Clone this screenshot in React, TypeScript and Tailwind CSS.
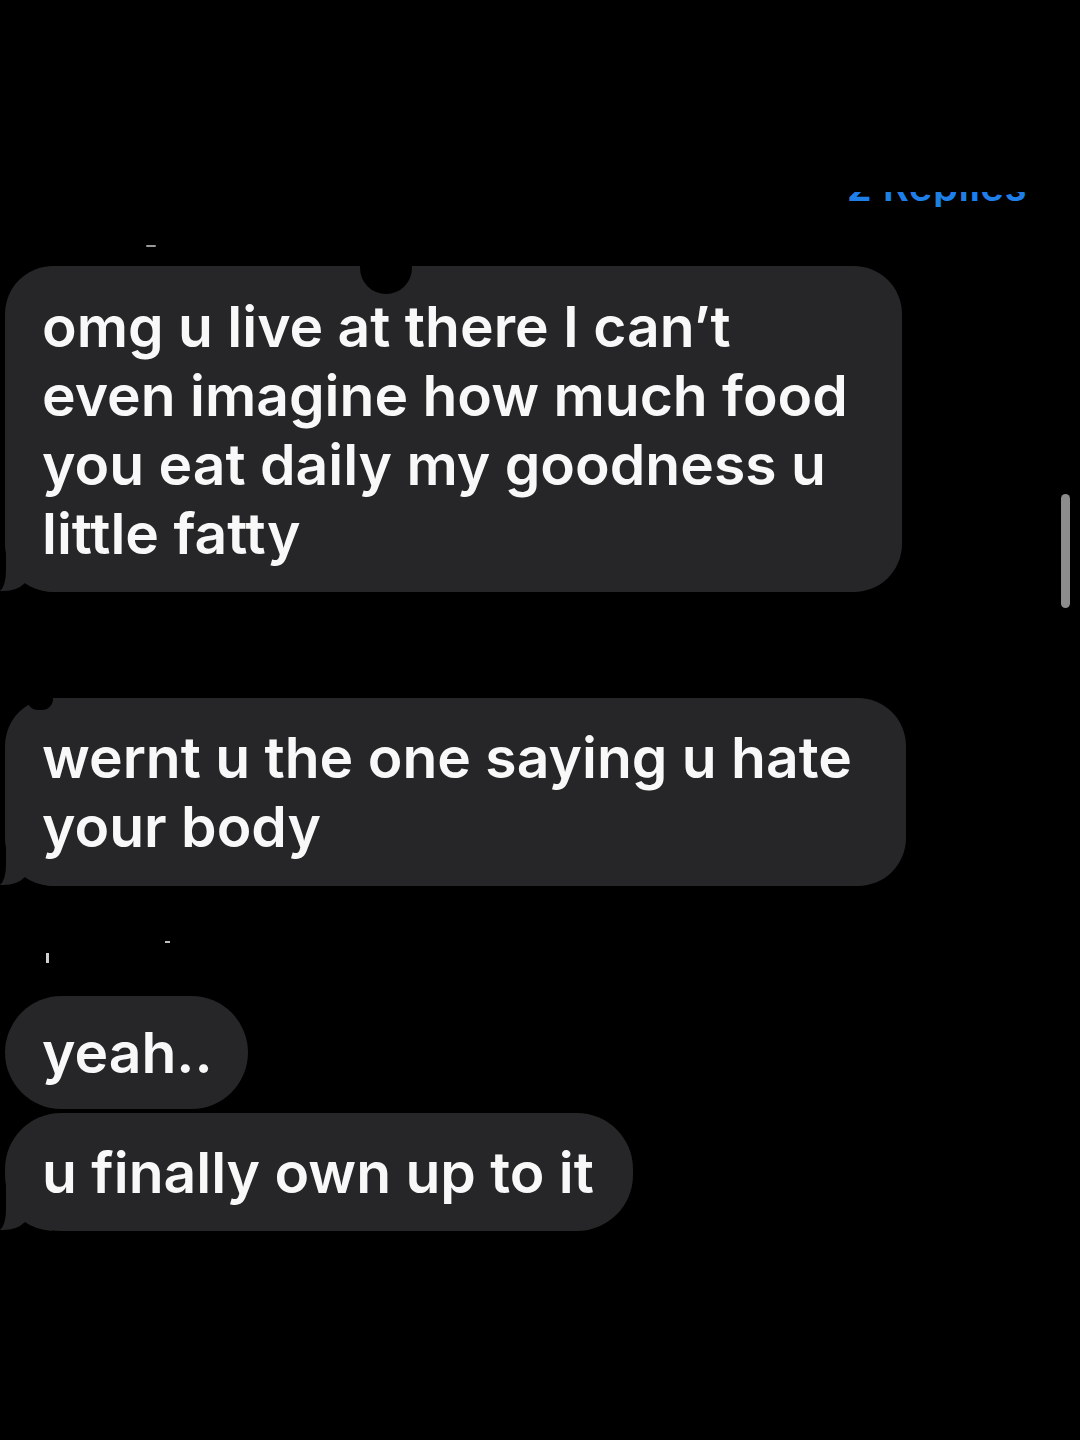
import React from "react";

function Tail() {
  return (
    <svg
      className="absolute left-[-5px] bottom-0"
      width="52"
      height="52"
      viewBox="0 0 52 52"
    >
      <path
        d="M 6 0 L 6 30 Q 6 46 0 51 Q 16 52 25 43 Q 34 50 52 52 L 52 0 Z"
        fill="#262628"
      />
    </svg>
  );
}

function Bubble({
  lines,
  width,
  tail,
  className,
  children,
}: {
  lines: string[];
  width: string;
  tail?: boolean;
  className?: string;
  children?: React.ReactNode;
}) {
  return (
    <div
      className={`relative ml-[5px] rounded-[48px] bg-[#262628] pl-[37px] ${width} ${className ?? ""}`}
    >
      {tail && <Tail />}
      <div className="relative flex flex-col">
        {lines.map((l, i) => (
          <div key={i} className="whitespace-nowrap">
            {l}
          </div>
        ))}
      </div>
      {children}
    </div>
  );
}

export default function App() {
  return (
    <div
      className="relative flex h-[1440px] w-[1080px] flex-col overflow-hidden bg-black text-white"
      style={{ fontFamily: "Inter, 'Noto Sans', sans-serif" }}
    >
      <div className="flex justify-end pr-[53px] pt-[192px]">
        <div className="flex h-[15px] items-end overflow-hidden">
          <span className="text-[40px] font-semibold leading-none text-[#1f7fe6] tracking-[0.5px]">
            2 Replies
          </span>
        </div>
      </div>

      <div className="mt-[38px] ml-[146px] h-[2px] w-[10px] rounded bg-[#9a9a9a]" />

      <div className="flex flex-col text-[57px] font-semibold leading-[69px] tracking-[0px] text-[#f8f8f8]">
        <Bubble
          className="mt-[19px] pt-[26px] pb-[24px]"
          width="w-[897px]"
          tail
          lines={[
            "omg u live at there I can\u2019t",
            "even imagine how much food",
            "you eat daily my goodness u",
            "little fatty",
          ]}
        >
          <div className="absolute left-[355px] top-[-24px] h-[52px] w-[52px] rounded-full bg-black" />
        </Bubble>

        <Bubble
          className="mt-[106px] pt-[25px] pb-[25px]"
          width="w-[901px]"
          tail
          lines={["wernt u the one saying u hate", "your body"]}
        >
          <div className="absolute left-[22px] top-[-10px] h-[22px] w-[26px] rounded-full bg-black" />
        </Bubble>

        <div className="flex h-[55px] items-start pt-[55px]">
          <div className="mt-[12px] ml-[46px] h-[10px] w-[3px] bg-[#cfcfcf]" />
          <div className="ml-[116px] h-[2px] w-[5px] bg-[#bdbdbd]" />
        </div>

        <Bubble
          className="mt-[55px] pt-[22px] pb-[22px] rounded-[57px]"
          width="w-[243px]"
          lines={["yeah.."]}
        />

        <Bubble
          className="mt-[4px] pt-[25px] pb-[24px] rounded-[56px]"
          width="w-[628px]"
          tail
          lines={["u finally own up to it"]}
        />
      </div>

      <div className="absolute left-[1061px] top-[494px] h-[114px] w-[9px] rounded-full bg-[#8c8c8c]" />
    </div>
  );
}
